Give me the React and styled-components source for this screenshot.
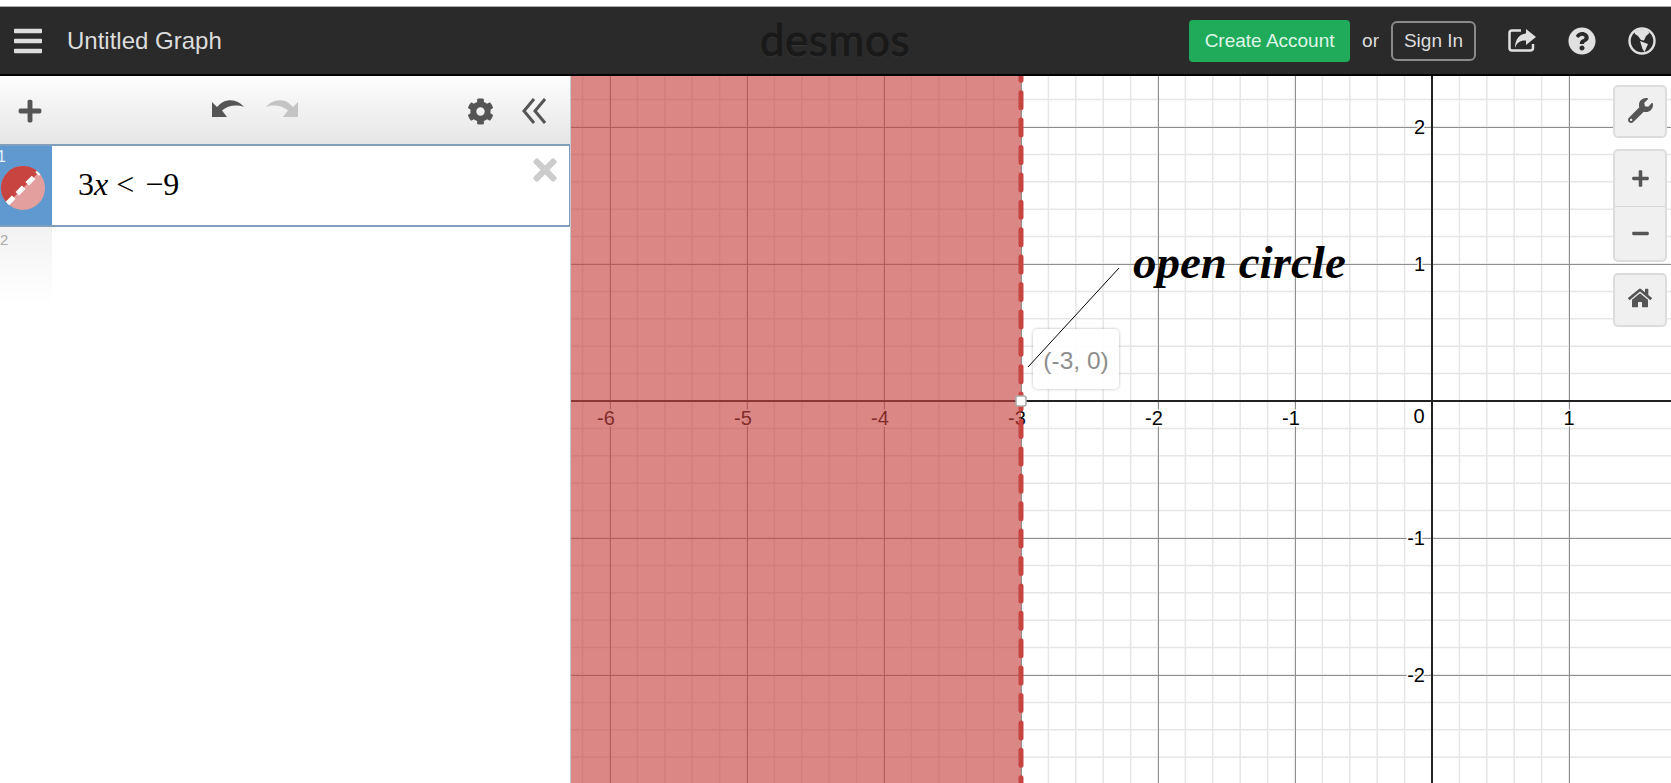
import React from "react";
import styled, { createGlobalStyle } from "styled-components";
import { FaBars, FaCog, FaHome, FaMinus, FaPlus, FaQuestionCircle, FaTimes, FaWrench } from "react-icons/fa";

const GlobalStyle = createGlobalStyle`
  html, body {
    margin: 0;
    height: 100%;
    overflow: hidden;
    background: #fff;
    font-family: "Liberation Sans", Arial, sans-serif;
  }
  #root { height: 100%; }
`;

const Page = styled.div`
  height: 100%;
  padding-top: 6px;
  box-sizing: border-box;
  display: flex;
  flex-direction: column;
`;

const Header = styled.header`
  height: 70px;
  flex: none;
  box-sizing: border-box;
  border-top: 1px solid #aaa;
  border-bottom: 2px solid #000;
  background: #2a2a2a;
  display: grid;
  grid-template-columns: 1fr auto 1fr;
  align-items: center;
  color: #e4e4e4;
`;

const HeaderLeft = styled.div`
  display: flex;
  align-items: center;
  padding-left: 12px;
  gap: 23px;
  font-size: 24px;
  color: #ddd;
`;

const Logo = styled.div`
  font-family: Lato, "Noto Sans", sans-serif;
  font-size: 44px;
  line-height: 1;
  letter-spacing: 0.5px;
  color: #191919;
  -webkit-text-stroke: 1px #191919;
  text-shadow: 0 1px 2px #3c3c3c;
  margin-left: -1px;
  margin-top: -3px;
`;

const HeaderRight = styled.div`
  display: flex;
  align-items: center;
  justify-content: flex-end;
  font-size: 19px;
  padding-right: 15px;
`;

const CreateButton = styled.div`
  width: 161px;
  height: 42px;
  display: flex;
  align-items: center;
  justify-content: center;
  border-radius: 4px;
  background: #1fab5a;
  color: #dff5e7;
`;

const OrLabel = styled.span`
  margin: 0 12px;
  color: #ddd;
`;

const SignInButton = styled.div`
  width: 85px;
  height: 40px;
  box-sizing: border-box;
  display: flex;
  align-items: center;
  justify-content: center;
  border: 2px solid #8a8a8a;
  border-radius: 6px;
  color: #ddd;
  margin-right: 32px;
`;

const HeaderIcons = styled.div`
  display: flex;
  align-items: center;
  gap: 32px;
  color: #e0e0e0;
`;

const Main = styled.main`
  flex: 1;
  min-height: 0;
  display: flex;
`;

const Sidebar = styled.aside`
  width: 571px;
  flex: none;
  box-sizing: border-box;
  border-right: 1px solid #c8c8d0;
  background: #fff;
  display: flex;
  flex-direction: column;
`;

const Toolbar = styled.div`
  height: 68px;
  flex: none;
  box-sizing: border-box;
  display: flex;
  align-items: center;
  padding: 2px 24px 0 17px;
  background: linear-gradient(#fdfdfd, #e6e6e6);
  color: #555;
`;

const UndoGroup = styled.div`
  display: flex;
  align-items: center;
  gap: 22px;
  margin-left: 169px;
  margin-top: -5px;
`;

const ToolGroup = styled.div`
  display: flex;
  align-items: center;
  gap: 28px;
  margin-left: auto;
`;

const ExpressionRow = styled.div`
  height: 83px;
  flex: none;
  box-sizing: border-box;
  position: relative;
  border: 2px solid #7f9fbc;
  border-left: none;
  border-right-width: 1px;
  display: flex;
  background: #fff;
`;

const ExpressionTab = styled.div`
  width: 52px;
  flex: none;
  position: relative;
  background: #6099cf;
  color: #e8f0f8;
  font-size: 16px;
  line-height: 1;
`;

const RowNumber = styled.span`
  position: absolute;
  left: -3px;
  top: 3px;
`;

const SwatchHolder = styled.div`
  position: absolute;
  left: 1px;
  top: 20px;
  display: flex;
`;

const MathText = styled.div`
  padding-left: 26px;
  padding-top: 19px;
  font-family: "Liberation Serif", serif;
  font-size: 32px;
  line-height: 1.2;
  color: #000;
`;

const MathVar = styled.i`
  margin-right: 8px;
`;

const MathOp = styled.span`
  margin-right: 11px;
`;

const CloseIcon = styled.div`
  position: absolute;
  right: 7px;
  top: 7px;
  display: flex;
  color: #ccc;
`;

const EmptyRow = styled.div`
  width: 52px;
  height: 78px;
  box-sizing: border-box;
  padding: 4px 0 0;
  background: linear-gradient(#f2f2f2, #fff);
  color: #aaa;
  font-size: 15px;
`;

const Graph = styled.section`
  flex: 1;
  min-width: 0;
  position: relative;
  overflow: hidden;
  background: #fff;
`;

const GraphCanvas = styled.svg`
  position: absolute;
  inset: 0;
  width: 100%;
  height: 100%;
`;

const Annotation = styled.div`
  position: absolute;
  left: 562px;
  top: 159px;
  font-family: "Liberation Serif", serif;
  font-size: 47px;
  font-weight: bold;
  font-style: italic;
  line-height: 1.15;
  color: #000;
  white-space: nowrap;
`;

const PointLabel = styled.div`
  position: absolute;
  left: 462px;
  top: 253px;
  width: 86px;
  height: 60px;
  box-sizing: border-box;
  padding-top: 4px;
  display: flex;
  align-items: center;
  justify-content: center;
  background: rgba(255, 255, 255, 0.9);
  border-radius: 5px;
  box-shadow: 0 0 3px rgba(0, 0, 0, 0.3);
  color: #8e8e8e;
  font-size: 24.5px;
`;

const Controls = styled.div`
  position: absolute;
  right: 4px;
  top: 9px;
  width: 54px;
  display: flex;
  flex-direction: column;
  gap: 11px;
`;

const ControlGroup = styled.div`
  box-sizing: border-box;
  border: 2px solid #dcdcdc;
  border-radius: 5px;
  background: #f0f0f0;
  display: flex;
  flex-direction: column;
  color: #555;
`;

const ControlButton = styled.div`
  height: ${(p) => p.$h || 50}px;
  box-sizing: border-box;
  padding-bottom: ${(p) => p.$lift || 0}px;
  display: flex;
  align-items: center;
  justify-content: center;
  & + & {
    border-top: 1px solid #d6d6d6;
  }
`;

// graph paper numbers, origin relative to the graph panel
const OX = 861;
const OY = 325;
const UNIT = 137;
const W = 1100;
const H = 707;
const SHADE_X = OX - 3 * UNIT;

const range = (from, to) => {
  const out = [];
  for (let i = from; i <= to; i++) out.push(i);
  return out;
};

const xLabels = [-6, -5, -4, -3, -2, -1, 1];
const yLabels = [2, 1, -1, -2];

const labelStyle = {
  fontFamily: '"Liberation Sans", Arial, sans-serif',
  fontSize: 20,
  paintOrder: "stroke",
  stroke: "#fff",
  strokeWidth: 3,
  fill: "#000",
};

const GraphPaper = () => (
  <GraphCanvas viewBox={`0 0 ${W} ${H}`} preserveAspectRatio="xMinYMin">
    {range(-32, 5).map((i) => {
      const x = OX + (i * UNIT) / 5;
      return <line key={i} x1={x} x2={x} y1={0} y2={H} stroke="#e6e6e6" strokeWidth={1.5} />;
    })}
    {range(-12, 20).map((i) => {
      const y = OY + (i * UNIT) / 5;
      return <line key={i} x1={0} x2={W} y1={y} y2={y} stroke="#e6e6e6" strokeWidth={1.5} />;
    })}
    {range(-7, 2).map((i) => (
      <line key={i} x1={OX + i * UNIT + 0.5} x2={OX + i * UNIT + 0.5} y1={0} y2={H} stroke="#8f8f8f" strokeWidth={1} />
    ))}
    {range(-3, 3).map((i) => (
      <line key={i} x1={0} x2={W} y1={OY + i * UNIT + 0.5} y2={OY + i * UNIT + 0.5} stroke="#8f8f8f" strokeWidth={1} />
    ))}
    <line x1={0} x2={W} y1={OY} y2={OY} stroke="#222" strokeWidth={2} />
    <line x1={OX} x2={OX} y1={0} y2={H} stroke="#222" strokeWidth={2} />

    {xLabels.map((n) => (
      <text key={n} x={OX + n * UNIT - (n < 0 ? 4 : 0)} y={OY + 24} textAnchor="middle" style={labelStyle}>
        {n}
      </text>
    ))}
    <text x={OX - 13} y={OY + 22} textAnchor="middle" style={labelStyle}>
      0
    </text>
    {yLabels.map((n) => (
      <text key={n} x={OX - 7} y={OY - n * UNIT + 7} textAnchor="end" style={labelStyle}>
        {n}
      </text>
    ))}

    <rect x={0} y={0} width={SHADE_X} height={H} fill="rgb(199,68,64)" fillOpacity={0.64} />
    <line
      x1={SHADE_X}
      x2={SHADE_X}
      y1={-4}
      y2={H}
      stroke="#c74440"
      strokeWidth={5}
      strokeDasharray="15 12.4"
      strokeDashoffset={6.7}
      strokeLinecap="round"
    />
    <rect x={SHADE_X - 5} y={OY - 5} width={10} height={10} rx={2} fill="#fff" stroke="#aaa" strokeWidth={1.5} />
  </GraphCanvas>
);

// hand-drawn pointer in the screenshot, it runs over the point label
const Leader = () => (
  <GraphCanvas viewBox={`0 0 ${W} ${H}`} preserveAspectRatio="xMinYMin">
    <line x1={457} y1={291} x2={548} y2={192} stroke="#000" strokeWidth={1} />
  </GraphCanvas>
);

const Swatch = () => (
  <svg width="45" height="45" viewBox="0 0 45 45">
    <circle cx="22" cy="22" r="22" fill="#e29f9d" />
    <path d="M6.4 37.6 A22 22 0 0 1 37.6 6.4 Z" fill="#c74440" />
    <line x1="6.4" y1="37.6" x2="37.6" y2="6.4" stroke="#fff" strokeWidth="5" strokeDasharray="9 5" />
  </svg>
);

const DoubleChevron = () => (
  <svg width="24" height="26" viewBox="0 0 24 26" fill="none" stroke="#555" strokeWidth="3">
    <polyline points="12,1 2,13 12,25" />
    <polyline points="23,1 13,13 23,25" />
  </svg>
);

const UndoArrow = ({ mirror, color }) => (
  <svg
    width="32"
    height="19"
    viewBox="0 0 32 19"
    fill={color}
    style={mirror ? { transform: "scaleX(-1)" } : undefined}
  >
    <path d="M0 3 V18 H15 L10 11.5 C15 7 24 5 32 8 C27 1 14 -3 5 8 Z" />
  </svg>
);

const ShareIcon = () => (
  <svg width="28" height="24" viewBox="0 0 28 24">
    <path
      d="M13 1.5 H4 Q1.5 1.5 1.5 4 V19 Q1.5 21.5 4 21.5 H22 Q25 21.5 25 19 V15"
      fill="none"
      stroke="#e0e0e0"
      strokeWidth="2.5"
    />
    <path d="M18 0 L28 8 L18 16 V11.5 C13 11 9 13 7 19 C7 11 11 5 18 4.5 Z" fill="#e0e0e0" />
  </svg>
);

const GlobeIcon = () => (
  <svg width="28" height="28" viewBox="0 0 28 28">
    <circle cx="14" cy="14" r="12.5" fill="none" stroke="#e0e0e0" strokeWidth="2.4" />
    <path
      d="M6 4 L18 1.5 L21.5 6 L18 9 L16 13.5 L13 13 L10 9 L7 7 Z M12 14 L20 17 L16.5 25 L14.5 22 Z"
      fill="#e0e0e0"
    />
  </svg>
);

const App = () => (
  <Page>
    <GlobalStyle />
    <Header>
      <HeaderLeft>
        <FaBars size={32} />
        <span>Untitled Graph</span>
      </HeaderLeft>
      <Logo>desmos</Logo>
      <HeaderRight>
        <CreateButton>Create Account</CreateButton>
        <OrLabel>or</OrLabel>
        <SignInButton>Sign In</SignInButton>
        <HeaderIcons>
          <ShareIcon />
          <FaQuestionCircle size={28} />
          <GlobeIcon />
        </HeaderIcons>
      </HeaderRight>
    </Header>
    <Main>
      <Sidebar>
        <Toolbar>
          <FaPlus size={26} />
          <UndoGroup>
            <UndoArrow color="#555" />
            <UndoArrow mirror color="#c4c4c4" />
          </UndoGroup>
          <ToolGroup>
            <FaCog size={27} />
            <DoubleChevron />
          </ToolGroup>
        </Toolbar>
        <ExpressionRow>
          <ExpressionTab>
            <RowNumber>1</RowNumber>
            <SwatchHolder>
              <Swatch />
            </SwatchHolder>
          </ExpressionTab>
          <MathText>
            3<MathVar>x</MathVar>
            <MathOp>&lt;</MathOp>−9
          </MathText>
          <CloseIcon>
            <FaTimes size={34} />
          </CloseIcon>
        </ExpressionRow>
        <EmptyRow>2</EmptyRow>
      </Sidebar>
      <Graph>
        <GraphPaper />
        <PointLabel>(-3, 0)</PointLabel>
        <Leader />
        <Annotation>open circle</Annotation>
        <Controls>
          <ControlGroup>
            <ControlButton $h={49} $lift={2}>
              <FaWrench size={25} />
            </ControlButton>
          </ControlGroup>
          <ControlGroup>
            <ControlButton $h={55}>
              <FaPlus size={19} />
            </ControlButton>
            <ControlButton $h={54}>
              <FaMinus size={19} />
            </ControlButton>
          </ControlGroup>
          <ControlGroup>
            <ControlButton $lift={5}>
              <FaHome size={24} />
            </ControlButton>
          </ControlGroup>
        </Controls>
      </Graph>
    </Main>
  </Page>
);

export default App;
